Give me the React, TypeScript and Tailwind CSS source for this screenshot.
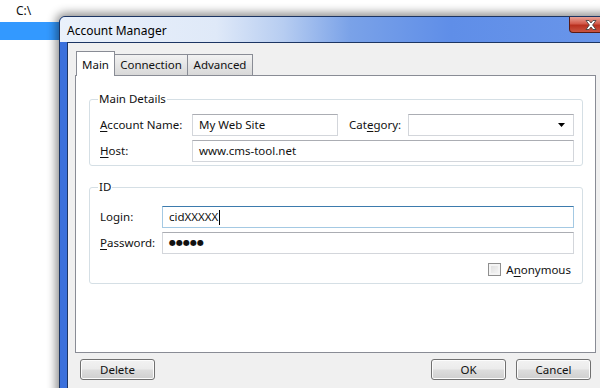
const field =
  "h-[22px] border border-[#d3d6db] border-t-[#abadb3] bg-white pl-[6px] flex items-center";

function U({ children }: { children: string }) {
  return <span className="underline underline-offset-[2px]">{children}</span>;
}

function Button({ label, className }: { label: string; className?: string }) {
  return (
    <div
      className={[
        "flex h-[21px] w-[75px] items-center justify-center rounded-[3px] border border-[#707070]",
        "bg-[linear-gradient(to_bottom,#f2f2f2_0%,#ebebeb_48%,#dddddd_52%,#cfcfcf_100%)] shadow-[inset_0_0_0_1px_#fcfcfc]",
        className ?? "",
      ].join(" ")}
    >
      {label}
    </div>
  );
}

function Tabs() {
  return (
    <div className="flex h-[24px] items-end pl-[8px]">
      <div className="relative z-10 -mb-px flex h-[25px] w-[39px] items-center justify-center border border-b-0 border-[#898c95] bg-white pt-[1px]">
        Main
      </div>
      <div className="flex h-[21px] w-[73px] items-center justify-center border border-b-0 border-l-0 border-[#898c95] bg-[linear-gradient(to_bottom,#f2f2f2,#d8d8d8)]">
        Connection
      </div>
      <div className="flex h-[21px] w-[65px] items-center justify-center border border-b-0 border-l-0 border-[#898c95] bg-[linear-gradient(to_bottom,#f2f2f2,#d8d8d8)]">
        Advanced
      </div>
    </div>
  );
}

function MainDetails() {
  return (
    <fieldset className="rounded-[3px] border border-[#d5dfe5] pb-[3px] pl-[10px] pr-[8px] pt-[7px]">
      <legend className="ml-[-2px] px-[1px] leading-[16px]">Main Details</legend>
      <div className="flex flex-col gap-[4px]">
        <div className="flex items-center">
          <div className="w-[92px]">
            <U>A</U>ccount Name:
          </div>
          <div className={field + " w-[146px]"}>My Web Site</div>
          <div className="ml-[11px] w-[59px]">
            Cat<U>e</U>gory:
          </div>
          <div className={field + " w-[166px] justify-end pr-[8px]"}>
            <svg width="7" height="4" viewBox="0 0 7 4">
              <path d="M0 0H7L3.5 4Z" fill="#000" />
            </svg>
          </div>
        </div>
        <div className="flex items-center">
          <div className="w-[92px]">
            <U>H</U>ost:
          </div>
          <div className={field + " w-[382px]"}>www.cms-tool.net</div>
        </div>
      </div>
    </fieldset>
  );
}

function IdGroup() {
  return (
    <fieldset className="mt-[13px] rounded-[3px] border border-[#d5dfe5] pb-[5px] pl-[10px] pr-[8px] pt-[11px]">
      <legend className="ml-[-2px] px-[1px] leading-[16px]">ID</legend>
      <div className="flex flex-col gap-[4px]">
        <div className="flex items-center">
          <div className="w-[62px]">Login:</div>
          <div className="flex h-[22px] w-[412px] items-center border border-[#a4c9e3] border-t-[#3d7bad] bg-white pl-[6px]">
            cidXXXXX
            <span className="ml-[1px] h-[15px] w-px bg-black" />
          </div>
        </div>
        <div className="flex items-center">
          <div className="w-[62px]">
            <U>P</U>assword:
          </div>
          <div className={field + " w-[412px] font-['DejaVu_Sans',sans-serif] text-[8px]"}>
            ●●●●●
          </div>
        </div>
      </div>
      <div className="mt-[7px] flex items-center justify-end gap-[5px] pr-[3px]">
        <div className="h-[13px] w-[13px] border border-[#8f8f8f] bg-[linear-gradient(135deg,#dcdcdc,#f8f8f8)] shadow-[inset_0_0_0_2px_#f4f4f4]" />
        <div>
          A<U>n</U>onymous
        </div>
      </div>
    </fieldset>
  );
}

function Dialog() {
  return (
    <div className="absolute left-[59px] top-[16px] flex h-[390px] w-[560px] flex-col rounded-tl-[6px] border border-[#1c3563] bg-[#3a70dc] shadow-[0_0_10px_3px_rgba(0,0,0,0.45)]">
      <div className="flex h-[25px] items-center rounded-tl-[5px] bg-[linear-gradient(to_right,#eaf1fb_0%,#dfe9f8_28%,#b7cdf1_40%,#7aa2e8_52%,#5f8ee8_70%,#6a96ea_100%)] pl-[7px]">
        <div className="flex-1 pt-[2px] text-[12px] text-black">Account Manager</div>
        <div className="mb-[8px] mr-[6px] flex h-[16px] w-[43px] items-center justify-center self-start rounded-b-[4px] border border-t-0 border-[#5a1a14] bg-[linear-gradient(to_bottom,#e9a296_0%,#d2594a_45%,#b8301f_55%,#c95542_100%)]">
          <svg width="12" height="10" viewBox="0 0 12 10">
            <path
              d="M1 0.5H4L6 3L8 0.5H11L7.6 5L11 9.5H8L6 7L4 9.5H1L4.4 5Z"
              fill="#fff"
              stroke="#3a3a3a"
              strokeWidth="0.8"
            />
          </svg>
        </div>
      </div>
      <div className="flex flex-1">
        <div className="w-[7px]" />
        <div className="flex-1 border-l border-t border-[#1c3563] bg-[#f0f0f0] pt-[8px]">
          <Tabs />
          <div className="ml-[7px] h-[278px] w-[521px] border border-[#898c95] bg-white px-[13px] pt-[15px]">
            <div className="w-[494px]">
              <MainDetails />
              <IdGroup />
            </div>
          </div>
          <div className="mt-[6px] flex w-[523px] items-center pl-[12px]">
            <Button label="Delete" />
            <div className="flex-1" />
            <Button label="OK" />
            <Button label="Cancel" className="ml-[10px]" />
          </div>
        </div>
      </div>
    </div>
  );
}

export default function App() {
  return (
    <div className="relative h-[388px] w-[600px] overflow-hidden bg-white font-['Noto_Sans',sans-serif] text-[11.5px] text-[#111]">
      <div className="flex h-[22px] items-center pl-[16px] text-[12px]">C:\</div>
      <div className="h-[18px] w-full bg-[#3399ff]" />
      <Dialog />
    </div>
  );
}
